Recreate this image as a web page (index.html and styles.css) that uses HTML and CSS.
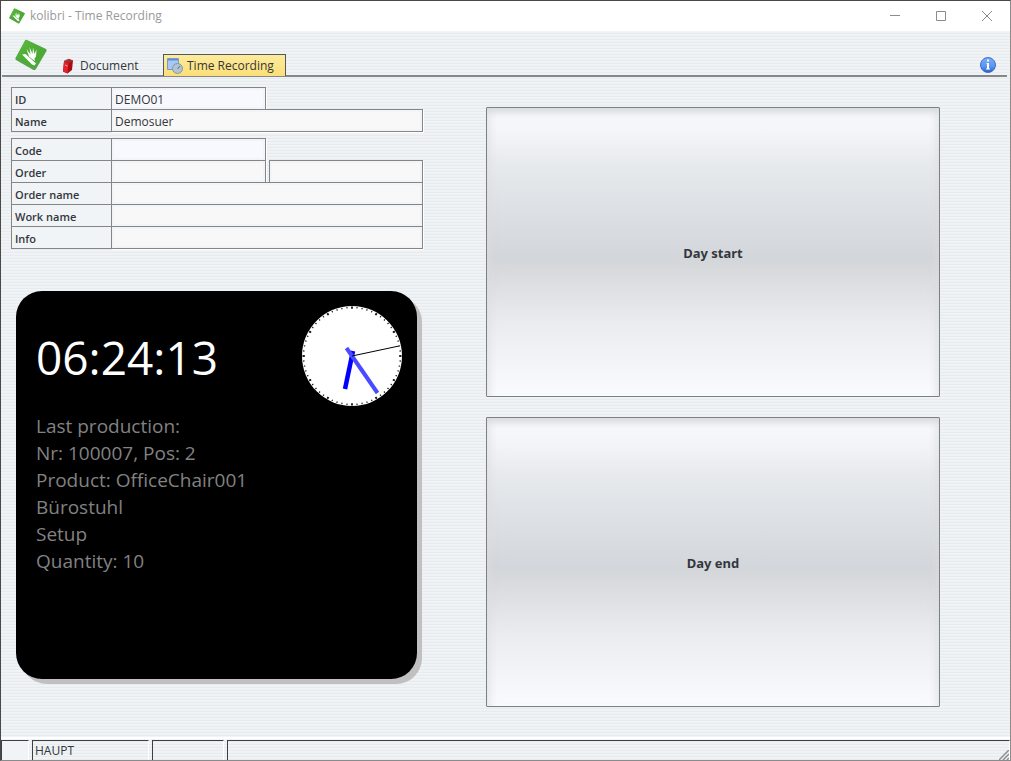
FILE: index.html
```html
<!DOCTYPE html>
<html lang="en">
<head>
<meta charset="utf-8">
<title>kolibri - Time Recording</title>
<link rel="stylesheet" href="styles.css">
</head>
<body>
<svg width="0" height="0" class="defs" aria-hidden="true">
  <defs>
    <linearGradient id="leaf" x1="0" y1="0" x2="1" y2="1"><stop offset="0" stop-color="#63bd45"/><stop offset=".4" stop-color="#4fae35"/><stop offset="1" stop-color="#49a634"/></linearGradient>
    <linearGradient id="info" x1="0" y1="0" x2="0" y2="1"><stop offset="0" stop-color="#79adf7"/><stop offset=".6" stop-color="#5c94f0"/><stop offset="1" stop-color="#2c5cc8"/></linearGradient>
    <symbol id="kolibri" viewBox="0 0 32 32">
      <path d="M10 1.500Q10.500.5 12 1L31 10Q32 10.500 31.500 12L21 30Q20 31.500 18.500 31L1 21Q0 20 .5 19Z" fill="#55a544"/>
      <path d="M10.500 1L31 10.500 20 28.500 1.500 18.500Z" fill="url(#leaf)"/>
      <path d="M7 15.500L10.500 15 21 24.500 19.500 26.500 17 25.500ZM14 17.500L11.500 10 15.500 15.500 14.500 8 17.500 15 18 8.500 19.500 15 21.500 10.500 21 17.500 19.500 19.500 20 22 17 20Z" fill="#fff"/>
    </symbol>
  </defs>
</svg>
<div class="window">
  <header class="titlebar">
    <svg class="app-icon"><use href="#kolibri"/></svg>
    <span class="title">kolibri - Time Recording</span>
    <button class="caption" aria-label="Minimize"><svg width="12" height="12"><path d="M1 5.500h10"/></svg></button>
    <button class="caption" aria-label="Maximize"><svg width="12" height="12"><path d="M1.500 1.500h9v9h-9z"/></svg></button>
    <button class="caption" aria-label="Close"><svg width="12" height="12"><path d="M1 1l10 10M11 1L1 11"/></svg></button>
  </header>
  <nav class="ribbon">
    <svg class="logo"><use href="#kolibri"/></svg>
    <button class="tab">
      <svg class="tab-icon" viewBox="0 0 16 16"><path d="M4 3.500L9 1 13 2.500 12 12 7.500 15.500 3 13.500Z" fill="#a90d12"/><path d="M4 3.500L8.500 5.500 7.500 15.500 3 13.500Z" fill="#e0262a"/><path d="M4 3.500L9 1 13 2.500 8.500 5.500Z" fill="#b5262a"/><path d="M4 3L9 1" stroke="#777"/><path d="M5 7l2.500 1" stroke="#f99"/></svg>
      <span>Document</span>
    </button>
    <button class="tab active">
      <svg class="tab-icon" viewBox="0 0 16 16"><path d="M.5.5h11v11H.5z" fill="#a5c8f5" stroke="#7b98c8"/><path d="M1 1h10v1.500H1z" fill="#5f8be0"/><circle cx="10.500" cy="10.500" r="5" fill="#b3c4d0" stroke="#8097a8"/><path d="M10.500 11l2.500-3" fill="none" stroke="#5d7184"/></svg>
      <span>Time Recording</span>
    </button>
    <button class="info" aria-label="Info"><svg width="18" height="18" viewBox="0 0 18 18"><circle cx="9" cy="9" r="7.500" fill="url(#info)" stroke="#3f6fd2"/><path d="M8 3.500h2v2H8zM7.500 7H10v5.500h1v1H7v-1h1V8h-.5z" fill="#fff"/></svg></button>
  </nav>
  <main class="content">
    <section class="left">
      <form class="form">
        <div class="group">
          <div class="row"><label for="f-id">ID</label><input id="f-id" class="short editable" value="DEMO01"></div>
          <div class="row"><label for="f-name">Name</label><input id="f-name" value="Demosuer" readonly></div>
        </div>
        <div class="group">
          <div class="row"><label for="f-code">Code</label><input id="f-code" class="short editable"></div>
          <div class="row"><label for="f-order">Order</label><input id="f-order" class="short" readonly><input class="extra" aria-label="Order position" readonly></div>
          <div class="row"><label for="f-oname">Order name</label><input id="f-oname" readonly></div>
          <div class="row"><label for="f-work">Work name</label><input id="f-work" readonly></div>
          <div class="row"><label for="f-info">Info</label><input id="f-info" readonly></div>
        </div>
      </form>
      <section class="display">
        <div class="display-top">
          <time class="time">06:24:13</time>
          <svg class="clock" viewBox="-50 -50 100 100" role="img" aria-label="Analog clock">
            <circle r="50" fill="#fff"/>
            <circle r="48.500" fill="none" stroke="#222" stroke-width="1.500" pathLength="360" stroke-dasharray="1.400 4.600" stroke-dashoffset=".7"/>
            <circle r="48.300" fill="none" stroke="#222" stroke-width="2.200" pathLength="360" stroke-dasharray="2.200 27.800" stroke-dashoffset="1.100"/>
            <path d="M1-5L-7 33" stroke="#00f" stroke-width="4.500"/>
            <path d="M-5.500-8L25.500 37" stroke="#4a4aff" stroke-width="4"/>
            <path d="M0 0L47-10" stroke="#000" stroke-width="1"/>
          </svg>
        </div>
        <p class="production">Last production:<br>Nr: 100007, Pos: 2<br>Product: OfficeChair001<br>Bürostuhl<br>Setup<br>Quantity: 10</p>
      </section>
    </section>
    <section class="actions">
      <button class="action">Day start</button>
      <button class="action">Day end</button>
    </section>
  </main>
  <footer class="status">
    <span class="cell c1"></span><span class="cell c2">HAUPT</span><span class="cell c3"></span>
    <span class="cell c4"><svg width="10" height="10"><path d="M0 10L10 0M4 10L10 4M8 10L10 8" stroke="#8b8f92" stroke-width="1.500"/></svg></span>
  </footer>
</div>
</body>
</html>
```

FILE: styles.css
```css
* { box-sizing: border-box; }
body { margin: 0; font-family: "Open Sans", "Noto Sans", sans-serif; font-size: 12px; color: #33373b; }
button, input { font: inherit; color: inherit; }
button { border: 0; padding: 0; background: none; }
.defs { position: absolute; }
.window {
  min-height: 100vh; display: flex; flex-direction: column;
  border: 1px solid #4b4848; border-right-color: #8b8b8b; border-bottom-color: #8b8b8b;
  background: repeating-linear-gradient(#f1f4f7 0 1px, #eef2f5 1px 2px, #e7ebee 2px 3px);
}
.titlebar { height: 30px; display: flex; align-items: center; background: #fff; color: #999; }
.app-icon { width: 16px; height: 16px; margin-left: 8px; }
.title { flex: 1; margin-left: 5px; padding-bottom: 1px; }
.caption { width: 46px; height: 30px; display: grid; place-items: center; }
.caption svg { fill: none; stroke: #8c8c8c; }
.ribbon { height: 46px; margin: 0 3px 0 1px; display: flex; align-items: flex-end; border-bottom: 2px solid #85888a; }
.logo { width: 32px; height: 32px; margin: 0 8px 4px 13px; }
.tab { height: 22px; display: flex; align-items: center; gap: 4px; padding: 0 4px; width: 108px; margin-bottom: -1px; border: 1px solid transparent; border-bottom: 0; white-space: nowrap; }
.tab.active { width: 123px; padding: 0 3px; background: linear-gradient(#fdeb9c, #fbdf78); border-color: #55585a; }
.tab-icon { width: 16px; height: 16px; flex: none; }
.info { margin: 0 10px 1px auto; height: 18px; }
.content { flex: 1; display: flex; padding: 10px 70px 0 10px; gap: 63px; }
.left { flex: 412 0 0; min-width: 0; }
.group { margin-bottom: 7px; }
.row { display: flex; height: 22px; }
.row label { width: 101px; height: 23px; padding: 1px 0 0 3px; line-height: 21px; font-size: 11px; font-weight: 600; background: #f0f4f7; border: 1px solid #858585; }
.row input { flex: 1; min-width: 0; height: 23px; margin-left: -1px; padding: 2px 3px 0; border: 1px solid #858585; border-radius: 0; background: #f8f8f8; box-shadow: inset 0 0 0 2px #f2f5f8, 1px 1px 0 #fff; outline: 0; }
.row .short { flex: 0 0 155px; }
.row .editable { background: #f8f9fe; }
.row .extra { margin-left: 3px; }
.display { margin: 43px 6px 0 5px; min-height: 388px; border-radius: 26px; background: #000; box-shadow: 5px 5px 0 #c1bfc0; padding: 15px; }
.display-top { display: flex; justify-content: space-between; align-items: flex-start; }
.time { margin: 21px 0 0 5px; font-size: 46px; line-height: 60px; color: #fff; font-weight: 400; }
.clock { width: 100px; height: 100px; }
.production { margin: 7px 5px 0; font-size: 19px; line-height: 27px; color: #828282; }
.actions { flex: 454 0 0; min-width: 0; display: flex; flex-direction: column; gap: 20px; padding-top: 20px; }
.action {
  height: 290px; padding-top: 2px; border: 1px solid #7b8083; border-radius: 1px; font-family: "Noto Sans", "Open Sans", sans-serif; font-size: 13px; font-weight: 700;
  background: linear-gradient(#f7f8fd 0, #f5f6fa 7%, #e7eaed 20%, #dfe2e6 32%, #d3d6da 52%, #d8dadc 57%, #ebecf0 75%, #fafbff 100%);
  box-shadow: inset 0 9px 6px -4px #d9dcdf, inset 9px 0 6px -5px #d9dcdf88, inset -9px 0 6px -5px #d9dcdf88;
}
.status { height: 23px; display: flex; gap: 3px; border-top: 2px solid #fff; padding-top: 1px; }
.cell { border-left: 1px solid #3d4043; border-top: 1px solid #3d4043; border-right: 1px solid #fff; padding-left: 2px; line-height: 19px; }
.c1 { width: 28px; background: #f0f4f7; }
.c2 { width: 117px; }
.c3 { width: 72px; }
.c4 { flex: 1; display: flex; justify-content: flex-end; align-items: flex-end; }
```
